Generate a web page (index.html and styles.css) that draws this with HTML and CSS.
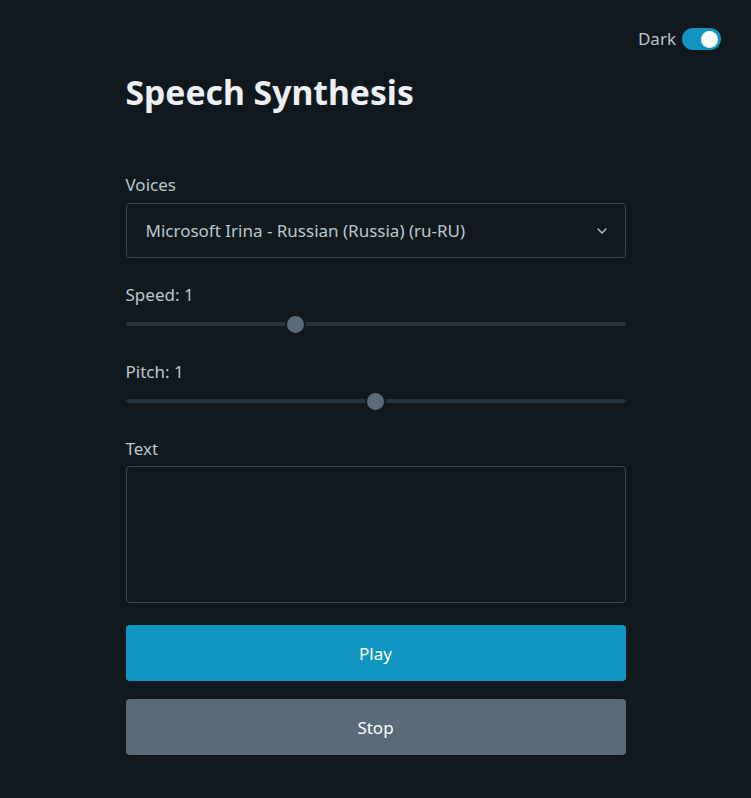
FILE: index.html
```html
<!DOCTYPE html>
<html lang="en">
<head>
<meta charset="utf-8">
<title>Speech Synthesis</title>
<link rel="stylesheet" href="styles.css">
</head>
<body>
<div class="topbar">
  <label class="theme-switch">
    <span class="theme-label">Dark</span>
    <span class="switch"><span class="knob"></span></span>
  </label>
</div>
<main class="container">
  <h1 class="title">Speech Synthesis</h1>
  <form class="form">
    <label class="field-label select-label" for="voices">Voices</label>
    <div class="select-wrap">
      <select id="voices" class="select">
        <option>Microsoft Irina - Russian (Russia) (ru-RU)</option>
      </select>
      <svg class="chevron" width="16" height="16" viewBox="0 0 24 24" fill="none" stroke="#bbc6ce" stroke-width="2" stroke-linecap="round" stroke-linejoin="round"><polyline points="6 9 12 15 18 9"></polyline></svg>
    </div>
    <label class="field-label field-gap range-label" for="speed">Speed: 1</label>
    <input id="speed" class="range" type="range" min="0.5" max="2" step="0.1" value="1">
    <label class="field-label field-gap range-label" for="pitch">Pitch: 1</label>
    <input id="pitch" class="range" type="range" min="0" max="2" step="0.1" value="1">
    <label class="field-label field-gap text-label" for="text">Text</label>
    <textarea id="text" class="textarea"></textarea>
    <button type="button" class="btn btn-primary">Play</button>
    <button type="button" class="btn btn-secondary">Stop</button>
  </form>
</main>
</body>
</html>
```

FILE: styles.css
```css
* { box-sizing: border-box; }
html, body {
  margin: 0;
  padding: 0;
  background: #11191f;
}
body {
  font-family: "Noto Sans", "Open Sans", sans-serif;
  font-size: 17px;
  line-height: 1.5;
  color: #bbc6ce;
}
.topbar {
  display: flex;
  justify-content: flex-end;
  padding: 28px 30px 0 0;
}
.theme-switch {
  display: flex;
  align-items: center;
  gap: 6px;
  cursor: pointer;
}
.theme-label {
  font-size: 17px;
  line-height: 22px;
}
.switch {
  display: flex;
  justify-content: flex-end;
  align-items: center;
  width: 39px;
  height: 22px;
  border-radius: 11px;
  background: #1095c1;
  padding: 0 3px;
}
.knob {
  width: 17px;
  height: 17px;
  border-radius: 50%;
  background: #ffffff;
}
.container {
  max-width: 500px;
  margin: 0 auto;
}
.title {
  margin: 18px 0 0;
  font-size: 33.7px;
  line-height: 48px;
  font-weight: 700;
  color: #edf0f3;
}
.form {
  display: flex;
  flex-direction: column;
  margin-top: 56px;
}
.field-label {
  display: block;
  line-height: 25px;
  margin-bottom: 5px;
}
.select-label { margin-bottom: 6px; }
.range-label { margin-bottom: 6px; }
.text-label { margin-bottom: 5px; }
.field-gap { margin-top: 24px; }
.select-wrap {
  position: relative;
}
.select {
  -webkit-appearance: none;
  appearance: none;
  width: 100%;
  height: 55px;
  padding: 0 40px 0 19px;
  background: #11191f;
  color: #bbc6ce;
  border: 1px solid #374956;
  border-radius: 4px;
  font-family: inherit;
  font-size: 17px;
  outline: none;
}
.chevron {
  position: absolute;
  right: 16px;
  top: 20px;
  pointer-events: none;
}
.range {
  -webkit-appearance: none;
  appearance: none;
  width: 100%;
  height: 22px;
  margin: 0;
  background: transparent;
}
.range::-webkit-slider-runnable-track {
  height: 4px;
  border-radius: 2px;
  background: #24333e;
}
.range::-webkit-slider-thumb {
  -webkit-appearance: none;
  appearance: none;
  width: 21px;
  height: 21px;
  margin-top: -8.5px;
  border-radius: 50%;
  background: #5b6b79;
  border: 2px solid #11191f;
}
.textarea {
  display: block;
  width: 100%;
  height: 137px;
  resize: none;
  background: #11191f;
  border: 1px solid #374956;
  border-radius: 4px;
  color: #bbc6ce;
  font-family: inherit;
  font-size: 17px;
  padding: 12px 19px;
  outline: none;
}
.btn {
  width: 100%;
  height: 56px;
  border: 0;
  border-radius: 4px;
  color: #ffffff;
  font-family: inherit;
  font-size: 17px;
  cursor: pointer;
}
.btn-primary {
  margin-top: 22px;
  background: #1095c1;
}
.btn-secondary {
  margin-top: 18px;
  background: #5b6b79;
}
```
